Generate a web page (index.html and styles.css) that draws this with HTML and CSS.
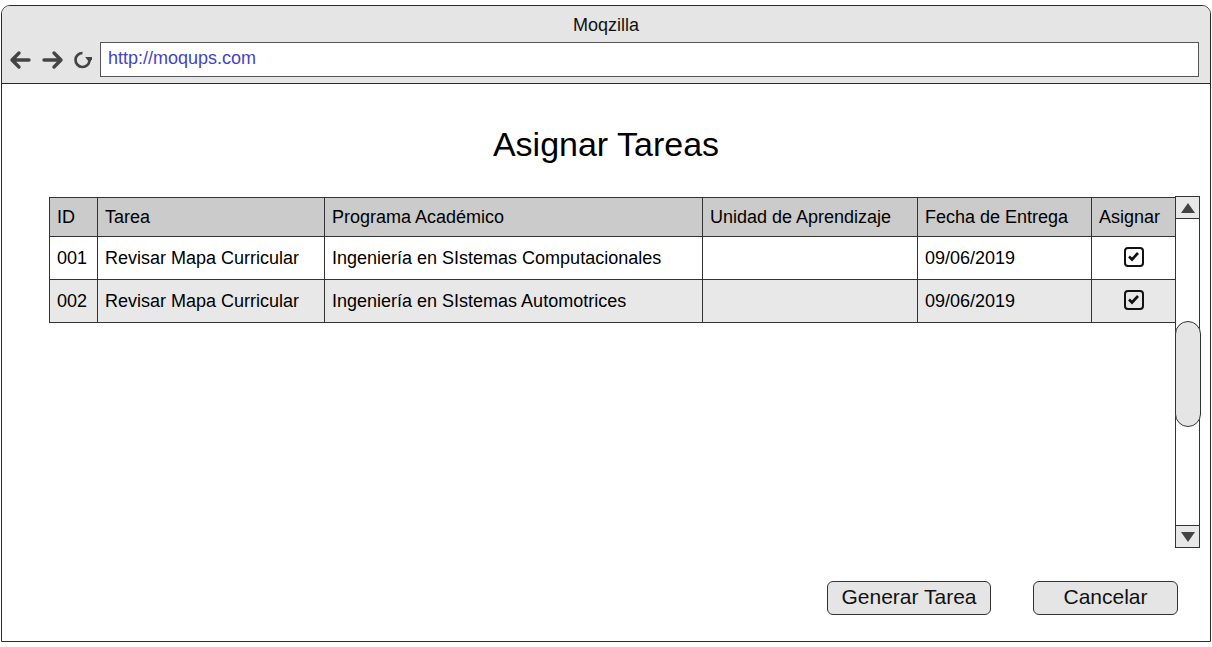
FILE: index.html
```html
<!DOCTYPE html>
<html>
<head>
<meta charset="utf-8">
<link rel="stylesheet" href="styles.css">
</head>
<body>
<div class="window">
  <div class="titlebar">
    <div class="title">Moqzilla</div>
    <div class="navrow">
      <svg class="nav" width="90" height="22" viewBox="0 0 90 22">
        <g fill="none" stroke="#444" stroke-width="3.4" stroke-linecap="round" stroke-linejoin="round">
          <path d="M10 11 H27 M17 4 L10 11 L17 18"/>
          <path d="M42 11 H59 M52 4 L59 11 L52 18"/>
        </g>
        <path d="M80.5 4 A7 7 0 1 0 87.5 11.5" fill="none" stroke="#444" stroke-width="2.7"/>
        <path d="M83.2 8 L91.5 8 L87.5 13.8 Z" fill="#444"/>
      </svg>
      <div class="address">http://moqups.com</div>
    </div>
  </div>
  <div class="content">
    <h1 class="heading">Asignar Tareas</h1>
    <div class="gridarea">
      <table class="tasks">
        <colgroup>
          <col class="c-id"><col class="c-tarea"><col class="c-prog"><col class="c-unidad"><col class="c-fecha"><col class="c-asig">
        </colgroup>
        <thead>
          <tr><th>ID</th><th>Tarea</th><th>Programa Académico</th><th>Unidad de Aprendizaje</th><th>Fecha de Entrega</th><th>Asignar</th></tr>
        </thead>
        <tbody>
          <tr><td>001</td><td>Revisar Mapa Curricular</td><td>Ingeniería en SIstemas Computacionales</td><td></td><td>09/06/2019</td><td class="chk"><span class="box"><svg width="13" height="11" viewBox="0 0 13 11"><path d="M2 5.5 L5 8.5 L11 2" fill="none" stroke="#111" stroke-width="2.6"/></svg></span></td></tr>
          <tr class="alt"><td>002</td><td>Revisar Mapa Curricular</td><td>Ingeniería en SIstemas Automotrices</td><td></td><td>09/06/2019</td><td class="chk"><span class="box"><svg width="13" height="11" viewBox="0 0 13 11"><path d="M2 5.5 L5 8.5 L11 2" fill="none" stroke="#111" stroke-width="2.6"/></svg></span></td></tr>
        </tbody>
      </table>
      <div class="scrollbar">
        <div class="sbtn up"><span class="tri-up"></span></div>
        <div class="track">
          <div class="thumb"></div>
        </div>
        <div class="sbtn down"><span class="tri-down"></span></div>
      </div>
    </div>
    <div class="actions">
      <button class="btn gen">Generar Tarea</button>
      <button class="btn cancel">Cancelar</button>
    </div>
  </div>
</div>
</body>
</html>
```
FILE: styles.css
```css
html, body {
  margin: 0;
  padding: 0;
  background: #ffffff;
}
body {
  font-family: "Liberation Sans", Arial, sans-serif;
  color: #000;
}
.window {
  margin: 5px 0 0 1px;
  width: 1210px;
  height: 637px;
  box-sizing: border-box;
  border: 1.5px solid #2a2a2a;
  border-radius: 9px 9px 0 0;
  display: flex;
  flex-direction: column;
  overflow: hidden;
}
.titlebar {
  background: #e5e5e5;
  border-bottom: 1.5px solid #2a2a2a;
  height: 78px;
  box-sizing: border-box;
  display: flex;
  flex-direction: column;
}
.title {
  text-align: center;
  font-size: 18px;
  color: #111;
  margin-top: 8px;
  height: 22px;
  line-height: 22px;
}
.navrow {
  display: flex;
  align-items: center;
  margin-top: 6px;
}
.nav {
  flex: none;
  margin-right: 8px;
}
.address {
  flex: none;
  width: 1099px;
  height: 35px;
  box-sizing: border-box;
  background: #fff;
  border: 1.5px solid #555;
  font-size: 18px;
  line-height: 31px;
  padding-left: 7px;
  color: #4343c6;
}
.content {
  flex: 1;
  display: flex;
  flex-direction: column;
  padding: 0 9px 0 47px;
}
.heading {
  margin: 40px -9px 0 -47px;
  height: 40px;
  line-height: 40px;
  font-size: 34px;
  font-weight: normal;
  text-align: center;
  color: #000;
}
.gridarea {
  display: flex;
  align-items: flex-start;
  margin-top: 32px;
}
.tasks {
  width: 1127px;
  border-collapse: collapse;
  table-layout: fixed;
  font-size: 18px;
  margin-top: 1px;
}
.c-id { width: 48px; }
.c-tarea { width: 227px; }
.c-prog { width: 378px; }
.c-unidad { width: 215px; }
.c-fecha { width: 174px; }
.c-asig { width: 84px; }
.tasks th, .tasks td {
  border: 1.5px solid #333;
  text-align: left;
  font-weight: normal;
  padding: 0 0 0 7px;
  white-space: nowrap;
  overflow: hidden;
}
.tasks th {
  background: #cbcbcb;
  height: 38px;
}
.tasks td {
  height: 42px;
  background: #fff;
}
.tasks tr.alt td {
  background: #e8e8e8;
}
.tasks td.chk {
  text-align: center;
  padding: 0;
}
.box {
  display: inline-flex;
  align-items: center;
  justify-content: center;
  width: 20px;
  height: 20px;
  box-sizing: border-box;
  border: 2.7px solid #111;
  border-radius: 4px;
  vertical-align: middle;
  position: relative;
  top: -2px;
}
.scrollbar {
  width: 25px;
  height: 352px;
  box-sizing: border-box;
  border: 1.5px solid #333;
  background: #fff;
  display: flex;
  flex-direction: column;
  margin-left: -1px;
}
.sbtn {
  height: 21px;
  background: #e8e8e8;
  display: flex;
  align-items: center;
  justify-content: center;
  flex: none;
}
.sbtn.up { border-bottom: 1.5px solid #333; }
.sbtn.down { border-top: 1.5px solid #333; }
.tri-up {
  width: 0; height: 0;
  border-left: 7px solid transparent;
  border-right: 7px solid transparent;
  border-bottom: 10px solid #444;
}
.tri-down {
  width: 0; height: 0;
  border-left: 7px solid transparent;
  border-right: 7px solid transparent;
  border-top: 10px solid #444;
}
.track {
  flex: 1;
}
.thumb {
  margin: 102px -1.5px 0 -1.5px;
  height: 104px;
  background: #e5e5e5;
  border: 1.5px solid #333;
  border-radius: 13px;
}
.actions {
  display: flex;
  justify-content: flex-end;
  gap: 42px;
  margin-top: 33px;
  padding-right: 23px;
}
.btn {
  font-family: "Liberation Sans", Arial, sans-serif;
  font-size: 21px;
  color: #111;
  background: #e5e5e5;
  border: 1.5px solid #333;
  border-radius: 6px;
  height: 34px;
  padding: 0 0 3px 0;
  line-height: 28px;
}
.btn.gen { width: 164px; }
.btn.cancel { width: 145px; }
```
